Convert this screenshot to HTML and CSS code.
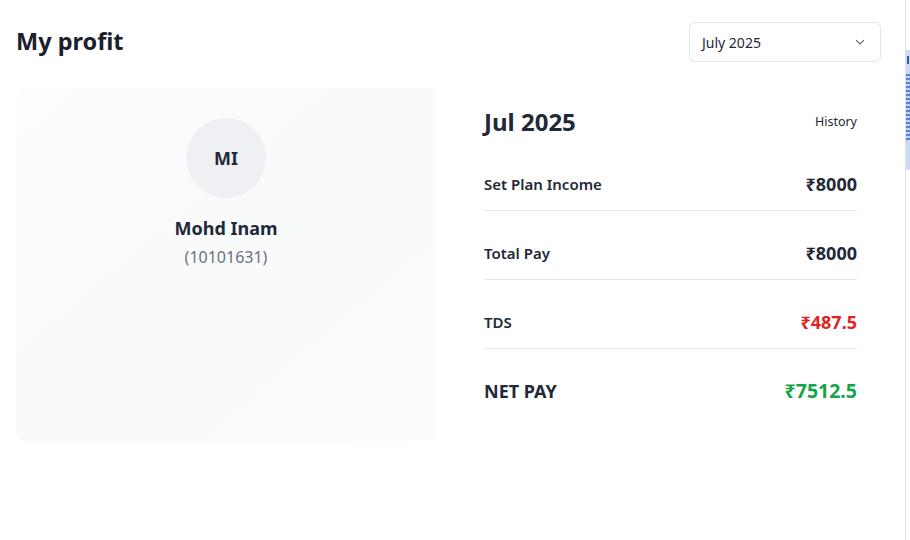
FILE: index.html
```html
<!DOCTYPE html>
<html lang="en">
<head>
<meta charset="utf-8">
<title>My profit</title>
<link rel="stylesheet" href="styles.css">
</head>
<body>
<div class="app">
  <main class="page">
    <header class="page-head">
      <h1 class="title">My profit</h1>
      <button class="select" type="button">
        <span>July 2025</span>
        <svg class="chev" width="12" height="12" viewBox="0 0 12 12" fill="none"><path d="M2.5 4.5L6 8l3.5-3.5" stroke="#6b7280" stroke-width="1.2" stroke-linecap="round" stroke-linejoin="round"/></svg>
      </button>
    </header>
    <section class="content">
      <div class="profile-card">
        <div class="avatar">MI</div>
        <div class="name">Mohd Inam</div>
        <div class="emp-id">(10101631)</div>
      </div>
      <div class="summary">
        <div class="summary-head">
          <h2 class="month">Jul 2025</h2>
          <a class="history">History</a>
        </div>
        <div class="row">
          <span class="label">Set Plan Income</span>
          <span class="value">₹8000</span>
        </div>
        <div class="row">
          <span class="label">Total Pay</span>
          <span class="value">₹8000</span>
        </div>
        <div class="row">
          <span class="label">TDS</span>
          <span class="value red">₹487.5</span>
        </div>
        <div class="row total">
          <span class="label">NET PAY</span>
          <span class="value green">₹7512.5</span>
        </div>
      </div>
    </section>
  </main>
  <aside class="edge">
    <div class="edge-tab">
      <div class="edge-mark"></div>
      <div class="edge-dots"></div>
    </div>
  </aside>
</div>
</body>
</html>
```
FILE: styles.css
```css
* { box-sizing: border-box; }
html, body { margin: 0; padding: 0; background: #fff; }
body {
  font-family: "Noto Sans", "Open Sans", sans-serif;
  color: #111827;
}
.app {
  display: flex;
  height: 540px;
}
.page {
  flex: 1;
  padding: 22px 24px 0 16px;
}
.edge {
  width: 5px;
  border-left: 1px solid #d9e1ee;
  padding-top: 50px;
}
.edge-tab {
  height: 120px;
  background: #cddcf6;
  padding-top: 6px;
}
.edge-mark {
  width: 2px;
  height: 8px;
  margin-left: 1px;
  background: #2f5bb8;
}
.edge-dots {
  margin-top: 10px;
  height: 68px;
  background: repeating-linear-gradient(180deg, #5a83d6 0 2px, #c2d4f3 2px 4px);
}
.page-head {
  display: flex;
  justify-content: space-between;
  align-items: center;
  height: 40px;
}
.title {
  margin: 0;
  font-size: 23.5px;
  font-weight: 700;
  line-height: 40px;
  margin-top: -2px;
  color: #1a202c;
}
.select {
  width: 192px;
  height: 40px;
  display: flex;
  align-items: center;
  justify-content: space-between;
  padding: 0 14px 0 12px;
  background: #fff;
  border: 1px solid #e3e5e8;
  border-radius: 6px;
  font-family: inherit;
  font-size: 14px;
  color: #1f2937;
}
.content {
  margin-top: 26px;
  display: grid;
  grid-template-columns: 420px 1fr;
  gap: 24px;
}
.profile-card {
  height: 353px;
  border-radius: 8px;
  background: linear-gradient(to bottom right, #fdfdfd 0%, #f9fafa 45%, #fafbfb 100%);
  display: flex;
  flex-direction: column;
  align-items: center;
  padding-top: 30px;
}
.avatar {
  width: 80px;
  height: 80px;
  border-radius: 50%;
  background: #eff0f4;
  display: flex;
  align-items: center;
  justify-content: center;
  font-size: 18px;
  font-weight: 700;
  color: #1f2937;
}
.name {
  margin-top: 17px;
  font-size: 18px;
  font-weight: 700;
  line-height: 26px;
  color: #1f2937;
}
.emp-id {
  margin-top: 6px;
  font-size: 16px;
  line-height: 20px;
  color: #6b7280;
}
.summary {
  padding: 17px 24px 0 24px;
}
.summary-head {
  display: flex;
  justify-content: space-between;
  align-items: center;
  height: 32px;
}
.month {
  margin: 0;
  font-size: 24px;
  font-weight: 700;
  color: #1f2937;
}
.history {
  font-size: 12.5px;
  color: #1f2937;
}
.row {
  display: flex;
  justify-content: space-between;
  align-items: center;
  margin-top: 21px;
  padding: 14px 0;
  line-height: 24px;
  border-bottom: 1px solid #e5e7eb;
}
.row + .row { margin-top: 16px; }
.row.total { border-bottom: none; }
.label {
  font-size: 15px;
  font-weight: 600;
  color: #1f2937;
}
.value {
  font-size: 18px;
  font-weight: 700;
  color: #1f2937;
}
.total .label { font-size: 18px; font-weight: 700; }
.total .value { font-size: 19.5px; }
.red { color: #dc2626; }
.green { color: #16a34a; }
```
